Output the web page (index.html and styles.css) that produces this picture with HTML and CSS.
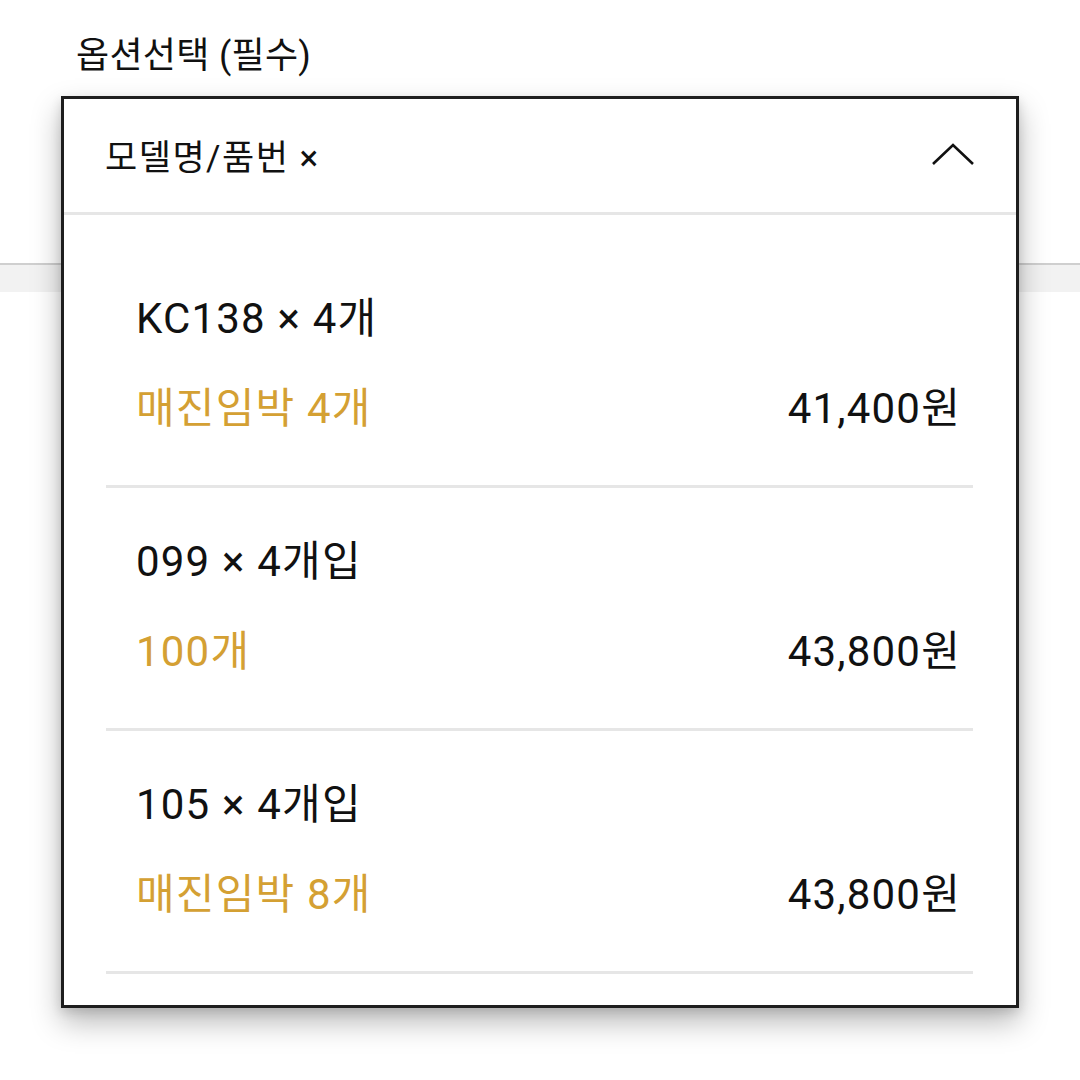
FILE: index.html
```html
<!DOCTYPE html>
<html lang="ko">
<head>
    <meta charset="UTF-8">
    <meta name="viewport" content="width=device-width, initial-scale=1.0">
    <title>옵션선택</title>
    <link rel="stylesheet" href="styles.css">
</head>
<body>
    <div class="field">
        <div class="field-label">옵션선택 (필수)</div>
        <div class="tabs-bg"></div>

        <div class="dropdown">
            <div class="dropdown-head">
                <span class="head-text">모델명/품번 ×</span>
                <svg class="chevron" width="44" height="26" viewBox="0 0 44 26">
                    <path d="M2 23 L22 4 L42 23" fill="none" stroke="#111" stroke-width="2.6"/>
                </svg>
            </div>

            <ul class="options">
                <li class="option">
                    <div class="opt-name">KC138 × 4개</div>
                    <div class="opt-row">
                        <span class="opt-stock">매진임박 4개</span>
                        <span class="opt-price">41,400원</span>
                    </div>
                </li>
                <li class="option">
                    <div class="opt-name">099 × 4개입</div>
                    <div class="opt-row">
                        <span class="opt-stock">100개</span>
                        <span class="opt-price">43,800원</span>
                    </div>
                </li>
                <li class="option">
                    <div class="opt-name">105 × 4개입</div>
                    <div class="opt-row">
                        <span class="opt-stock">매진임박 8개</span>
                        <span class="opt-price">43,800원</span>
                    </div>
                </li>
            </ul>
        </div>
    </div>
</body>
</html>
```

FILE: styles.css
```css
body {
    margin: 0;
    background: #fff;
    color: #111;
    font-family: Roboto, "Noto Sans CJK KR", sans-serif;
}
.field {
    position: relative;
    height: 1080px;
}
.field-label {
    padding: 33px 0 0 76px;
    font-size: 36px;
    line-height: 46px;
    letter-spacing: 0.3px;
}
.tabs-bg {
    margin-top: 184px;
    height: 27px;
    border-top: 2px solid #cfcfcf;
    background: #f2f2f2;
}
.dropdown {
    position: absolute;
    top: 96px;
    left: 61px;
    width: 952px;
    background: #fff;
    border: 3px solid #1e1e1e;
    box-shadow: 0 14px 28px rgba(0, 0, 0, 0.28), 0 4px 10px rgba(0, 0, 0, 0.12);
}
.dropdown-head {
    display: flex;
    align-items: center;
    justify-content: space-between;
    height: 113px;
    padding: 0 41px 0 41px;
    border-bottom: 3px solid #e6e6e6;
}
.head-text {
    font-size: 35px;
    letter-spacing: 1.5px;
    margin-top: -3px;
}
.chevron {
    display: block;
    margin-top: -4px;
}
.options {
    list-style: none;
    margin: 0;
    padding: 30px 43px 31px 42px;
}
.option {
    padding: 52px 12px 0 30px;
    height: 188px;
    border-bottom: 3px solid #e6e6e6;
}
.opt-name,
.opt-row {
    font-size: 42px;
    line-height: 44px;
    letter-spacing: 1.2px;
}
.opt-row {
    display: flex;
    justify-content: space-between;
    margin-top: 46px;
}
.opt-stock {
    color: #d4a033;
}
```
